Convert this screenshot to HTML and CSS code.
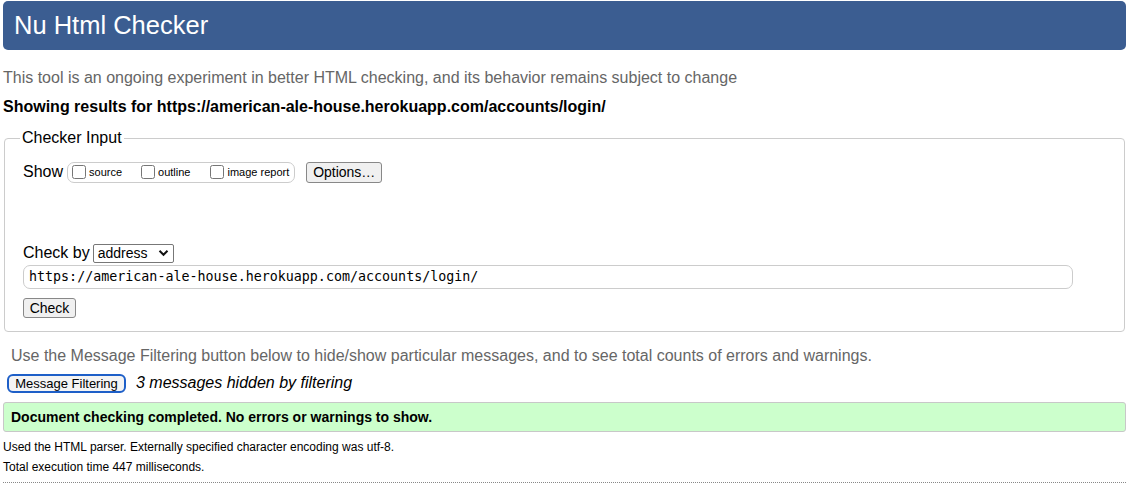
FILE: index.html
```html
<!DOCTYPE html>
<html lang="en">
<head>
<meta charset="utf-8">
<title>Nu Html Checker</title>
<link rel="stylesheet" href="styles.css">
</head>
<body>
<h1 class="title">Nu Html Checker</h1>
<p class="intro">This tool is an ongoing experiment in better HTML checking, and its behavior remains subject to change</p>
<p class="showing">Showing results for https://american-ale-house.herokuapp.com/accounts/login/</p>
<fieldset class="checker">
  <legend>Checker Input</legend>
  <div class="show-row">
    <span class="show-label">Show</span>
    <span class="opts">
      <label class="opt opt-source"><input type="checkbox">source</label>
      <label class="opt opt-outline"><input type="checkbox">outline</label>
      <label class="opt"><input type="checkbox">image report</label>
    </span>
    <button class="btn btn-options">Options…</button>
  </div>
  <div class="checkby-row">
    <span class="checkby-label">Check by</span>
    <span class="select">address<svg width="11" height="8" viewBox="0 0 11 8"><path d="M1.5 1.8 L5.5 5.8 L9.5 1.8" fill="none" stroke="#111" stroke-width="2"/></svg></span>
  </div>
  <div class="url">https://american-ale-house.herokuapp.com/accounts/login/</div>
  <button class="btn btn-check">Check</button>
</fieldset>
<p class="filter-note">Use the Message Filtering button below to hide/show particular messages, and to see total counts of errors and warnings.</p>
<div class="filter-row">
  <button class="btn btn-filter">Message Filtering</button>
  <span class="hidden-note">3 messages hidden by filtering</span>
</div>
<div class="success">Document checking completed. No errors or warnings to show.</div>
<p class="small">Used the HTML parser. Externally specified character encoding was utf-8.</p>
<p class="small">Total execution time 447 milliseconds.</p>
<div class="rule"></div>
</body>
</html>
```
FILE: styles.css
```css
html, body {
  background: #fff;
}
body {
  margin: 0;
  padding: 1px 5px 0 3px;
  font-family: "Liberation Sans", Arial, Helvetica, sans-serif;
  color: #000;
}
.title {
  margin: 0;
  height: 49px;
  line-height: 48px;
  padding: 0 11px;
  background: #3b5d91;
  color: #fff;
  font-size: 25.5px;
  font-weight: normal;
  border-radius: 5px;
}
.intro {
  margin: 18px 0 0;
  font-size: 16px;
  line-height: 20px;
  color: #666;
}
.showing {
  margin: 9px 0 0;
  font-size: 16px;
  line-height: 20px;
  font-weight: bold;
}
.checker {
  margin: 12px 1px 0 1px;
  padding: 10px 18px 13px 18px;
  border: 1px solid #ccc;
  border-radius: 4px;
}
.checker legend {
  padding: 0 2px;
  margin-left: -3px;
  font-size: 16px;
  line-height: 18px;
}
.show-row {
  display: flex;
  align-items: center;
  height: 22px;
  margin-top: 4px;
}
.show-label {
  font-size: 16px;
  margin-right: 4px;
}
.opts {
  display: flex;
  align-items: center;
  height: 21px;
  box-sizing: border-box;
  border: 1px solid #ccc;
  border-radius: 7px;
  padding: 0 5px 0 4px;
  font-size: 11px;
}
.opt {
  display: flex;
  align-items: center;
}
.opt input {
  margin: 0 3px 0 0;
  width: 14px;
  height: 14px;
}
.opt-source { margin-right: 19px; }
.opt-outline { margin-right: 20px; }
.btn {
  font-family: "Liberation Sans", Arial, sans-serif;
  background: #f0f0f0;
  border: 1px solid #888;
  border-radius: 3px;
  color: #000;
  padding: 0 6px;
  box-sizing: border-box;
}
.btn-options {
  margin-left: 11px;
  height: 21px;
  width: 76px;
  font-size: 14px;
  padding: 0;
}
.checkby-row {
  display: flex;
  align-items: center;
  margin-top: 60px;
  height: 20px;
}
.checkby-label {
  font-size: 16px;
  margin-right: 3px;
}
.select {
  display: flex;
  align-items: center;
  justify-content: space-between;
  width: 81px;
  height: 19px;
  box-sizing: border-box;
  border: 1px solid #777;
  border-radius: 2px;
  padding: 0 4px 0 4px;
  font-size: 14px;
}
.url {
  margin-top: 2px;
  width: 1050px;
  height: 24px;
  box-sizing: border-box;
  border: 1px solid #ccc;
  border-radius: 7px;
  padding: 0 5px;
  line-height: 22px;
  font-family: "DejaVu Sans Mono", "Liberation Mono", monospace;
  font-size: 13.33px;
}
.btn-check {
  display: block;
  margin-top: 9px;
  width: 53px;
  height: 20px;
  font-size: 14px;
  padding: 0;
}
.filter-note {
  margin: 14px 0 0 8px;
  font-size: 16px;
  line-height: 20px;
  color: #666;
}
.filter-row {
  display: flex;
  align-items: center;
  margin-top: 7px;
  height: 20px;
}
.btn-filter {
  margin-left: 4px;
  height: 19px;
  width: 119px;
  font-size: 13px;
  border: 2px solid #1e5fc8;
  border-radius: 6px;
  background: #f4f4f4;
  padding: 0;
}
.hidden-note {
  margin-left: 10px;
  font-style: italic;
  font-size: 16px;
}
.success {
  margin-top: 9px;
  height: 30px;
  box-sizing: border-box;
  background: #ccffcc;
  border: 1px solid #c8c8c8;
  border-radius: 3px;
  padding: 0 7px;
  line-height: 28px;
  font-weight: bold;
  font-size: 14px;
}
.small {
  margin: 8px 0 0;
  font-size: 12px;
  line-height: 14px;
}
.small + .small {
  margin-top: 6px;
}
.rule {
  margin-top: 8px;
  border-top: 1px dotted #888;
}
```
